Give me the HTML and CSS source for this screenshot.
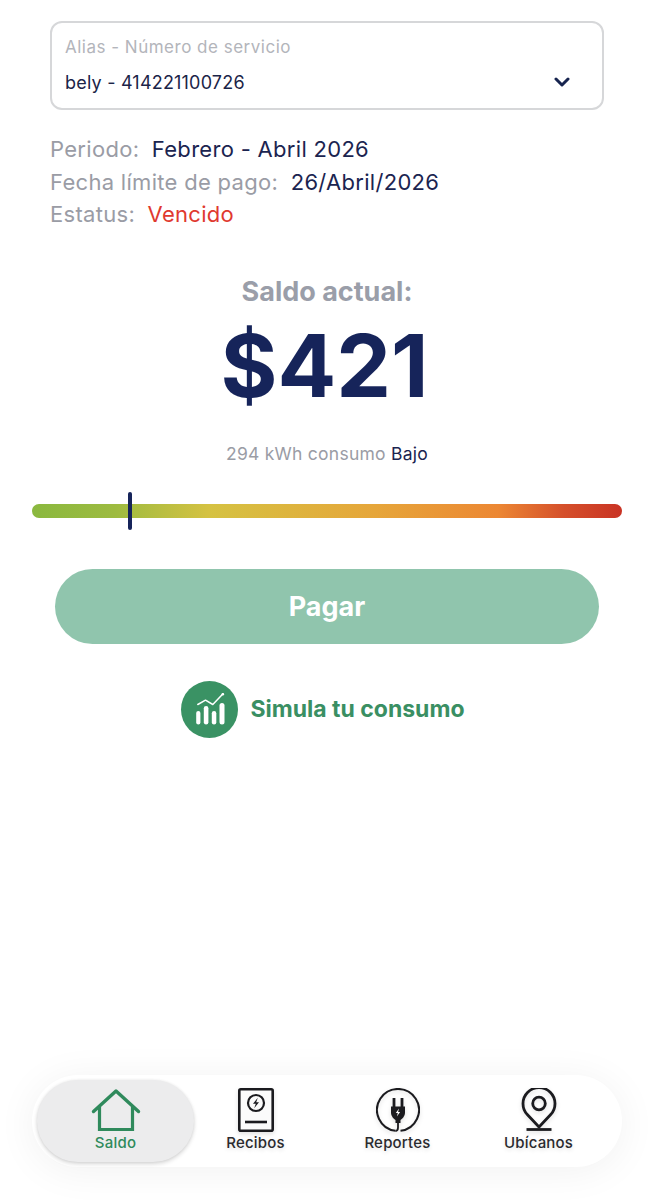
FILE: index.html
```html
<!DOCTYPE html>
<html lang="es">
<head>
  <meta charset="UTF-8" />
  <meta name="viewport" content="width=device-width, initial-scale=1.0"/>
  <title>Saldo</title>
  <link rel="stylesheet" href="styles.css">
</head>
<body>
  <main class="screen">
    <div class="select">
      <div class="select-label">Alias - Número de servicio</div>
      <div class="select-row">
        <span class="select-value">bely - 414221100726</span>
        <svg class="chevron" width="16" height="10" viewBox="0 0 16 10"><path d="M2 2l6 6 6-6" fill="none" stroke="#17244f" stroke-width="3" stroke-linecap="round" stroke-linejoin="round"/></svg>
      </div>
    </div>

    <div class="info">
      <div class="info-row"><span class="info-key">Periodo:</span><span class="info-val">Febrero - Abril 2026</span></div>
      <div class="info-row"><span class="info-key">Fecha límite de pago:</span><span class="info-val">26/Abril/2026</span></div>
      <div class="info-row"><span class="info-key">Estatus:</span><span class="info-val late">Vencido</span></div>
    </div>

    <h2 class="balance-title">Saldo actual:</h2>
    <div class="balance">$421</div>
    <p class="usage">294 kWh consumo <span class="usage-level">Bajo</span></p>

    <div class="meter">
      <div class="meter-bar"></div>
      <div class="meter-mark"></div>
    </div>

    <button class="pay">Pagar</button>

    <a class="simulate">
      <span class="simulate-icon">
        <svg width="32" height="32" viewBox="0 0 32 32">
          <g fill="#fff">
            <rect x="2.200" y="18" width="4.200" height="13.500" rx="2.100"/>
            <rect x="9.800" y="13" width="4.600" height="18.500" rx="2.300"/>
            <rect x="17.800" y="18" width="4.500" height="13.500" rx="2.200"/>
            <rect x="25.500" y="10" width="5" height="21.500" rx="2.500"/>
          </g>
          <path d="M3.800 11.500l7.700-4.300 7.300 4.300L28.800 1" fill="none" stroke="#fff" stroke-width="1.500" stroke-linecap="round" stroke-linejoin="round"/>
          <circle cx="28.800" cy="1.200" r="1.300" fill="#fff"/>
        </svg>
      </span>
      <span class="simulate-text">Simula tu consumo</span>
    </a>
  </main>

  <nav class="tabs">
    <a class="tab tab-active">
      <svg class="tab-icon" width="50" height="44" viewBox="0 0 50 44">
        <path d="M2.500 23.500L25 3l22.500 20.500" fill="none" stroke="#2f8a5c" stroke-width="3.400" stroke-linecap="round" stroke-linejoin="round"/>
        <path d="M8.500 19v22.500h33V19" fill="none" stroke="#2f8a5c" stroke-width="3.200"/>
      </svg>
      <span>Saldo</span>
    </a>
    <a class="tab">
      <svg class="tab-icon" width="36" height="44" viewBox="0 0 36 44">
        <rect x="1.300" y="1.300" width="33.400" height="41.400" rx="1.500" fill="#fbfbfb" stroke="#1b1b1f" stroke-width="2.600"/>
        <circle cx="18" cy="15" r="8" fill="none" stroke="#1b1b1f" stroke-width="2.200"/>
        <path d="M19.800 9.800l-4.800 6h2.800l-1.600 4.400 4.800-6h-2.800z" fill="#1b1b1f"/>
        <path d="M7 34h22" stroke="#1b1b1f" stroke-width="2.600"/>
      </svg>
      <span>Recibos</span>
    </a>
    <a class="tab">
      <svg class="tab-icon" width="44" height="44" viewBox="0 0 44 44">
        <path d="M19.500 42.800A21 21 0 1 1 24.500 42.800" fill="none" stroke="#1b1b1f" stroke-width="2"/>
        <path d="M18 10v9M26 10v9" stroke="#1b1b1f" stroke-width="2.800"/>
        <path d="M15 18.500h14v6c0 4-3 6.500-4.500 7.500v3h-5v-3c-1.500-1-4.500-3.500-4.500-7.500z" fill="#1b1b1f"/>
        <path d="M23 20.500l-3.200 4.500h2l-.9 3.500 3.200-4.500h-2z" fill="#fff"/>
        <path d="M22 34v5.500c0 2.500-1.500 3.500-2.500 3.500" fill="none" stroke="#1b1b1f" stroke-width="1.800"/>
      </svg>
      <span>Reportes</span>
    </a>
    <a class="tab">
      <svg class="tab-icon" width="36" height="44" viewBox="0 0 36 44">
        <path d="M18 39L6.500 26.800A16 16 0 1 1 29.500 26.800z" fill="none" stroke="#1b1b1f" stroke-width="2.800" stroke-linejoin="round"/>
        <circle cx="18" cy="15.500" r="6.300" fill="none" stroke="#1b1b1f" stroke-width="2.800"/>
        <path d="M5.500 41.500h25" stroke="#1b1b1f" stroke-width="2.800"/>
      </svg>
      <span>Ubícanos</span>
    </a>
  </nav>
</body>
</html>
```

FILE: styles.css
```css
* {
  box-sizing: border-box;
}
body {
  margin: 0;
  height: 1200px;
  background: #fff;
  font-family: Inter, "Liberation Sans", sans-serif;
  display: flex;
  flex-direction: column;
  overflow: hidden;
}
.screen {
  flex: 1;
  padding: 21px 0 0;
  display: flex;
  flex-direction: column;
  align-items: center;
}
.select {
  width: 554px;
  height: 89px;
  border: 2px solid #d6d7d9;
  border-radius: 12px;
  padding: 14px 13px 0;
}
.select-label {
  font-size: 17px;
  letter-spacing: 0.5px;
  line-height: 20px;
  color: #b3b5bb;
}
.select-row {
  display: flex;
  justify-content: space-between;
  align-items: center;
  margin-top: 15px;
  padding-right: 19px;
  height: 20px;
}
.select-value {
  font-size: 18px;
  letter-spacing: 0.2px;
  color: #1b2448;
}
.info {
  width: 554px;
  margin-top: 23px;
}
.info-row {
  display: flex;
  gap: 12.500px;
  font-size: 22px;
  letter-spacing: 0.3px;
  line-height: 32.500px;
}
.info-key {
  color: #9a9ca5;
}
.info-val {
  color: #1b2450;
}
.info-val.late {
  color: #e0392f;
}
.balance-title {
  margin: 45px 0 0;
  font-size: 27px;
  line-height: 32px;
  font-weight: 700;
  color: #9a9ea9;
}
.balance {
  margin: 12px 5px 0 0;
  font-size: 87px;
  line-height: 92px;
  font-weight: 700;
  color: #16245a;
}
.usage {
  margin: 31px 0 0;
  font-size: 17.500px;
  letter-spacing: 0.25px;
  line-height: 22px;
  color: #9a9ca5;
}
.usage-level {
  color: #1b2450;
}
.meter {
  position: relative;
  width: 590px;
  height: 38px;
  margin-top: 27px;
  display: flex;
  align-items: center;
}
.meter-bar {
  width: 100%;
  height: 14px;
  border-radius: 7px;
  background: linear-gradient(90deg, #8ab83f 0%, #9dbb40 14%, #d5c242 30%, #e6a63a 58%, #ec8733 79%, #d5502b 90%, #c93324 100%);
}
.meter-mark {
  position: absolute;
  left: 96px;
  top: 0;
  width: 4px;
  height: 38px;
  border-radius: 2px;
  background: #16245a;
}
.pay {
  width: 544px;
  height: 75px;
  margin-top: 39px;
  border: 0;
  border-radius: 38px;
  background: #90c5ad;
  color: #fff;
  font-family: inherit;
  font-size: 27px;
  font-weight: 700;
}
.simulate {
  display: flex;
  align-items: center;
  gap: 12px;
  margin: 37px 8px 0 0;
}
.simulate-icon {
  width: 57px;
  height: 57px;
  border-radius: 50%;
  background: #3a9264;
  display: flex;
  align-items: center;
  justify-content: center;
}
.simulate-text {
  font-size: 23px;
  font-weight: 700;
  color: #3a8f63;
}
.tabs {
  align-self: center;
  width: 590px;
  height: 92px;
  margin-bottom: 33px;
  padding: 5px 0 5px 5px;
  border-radius: 46px;
  background: #fff;
  box-shadow: 0 4px 40px rgba(0, 0, 0, 0.06);
  display: grid;
  grid-template-columns: 157px 123px 161px 121px;
}
.tab {
  display: flex;
  flex-direction: column;
  align-items: center;
  justify-content: flex-end;
  padding-bottom: 10px;
  font-size: 15px;
  font-weight: 500;
  letter-spacing: 0.2px;
  line-height: 19px;
  color: #2a2a2e;
  text-shadow: 0 2px 4px rgba(0, 0, 0, 0.12);
}
.tab-icon {
  display: block;
  margin-bottom: 1px;
  filter: drop-shadow(0 2px 2px rgba(0, 0, 0, 0.12));
}
.tab-active {
  border-radius: 41px;
  background: #ececed;
  box-shadow: 0 2px 4px rgba(0, 0, 0, 0.16), 0 0 3px rgba(0, 0, 0, 0.06);
  color: #2f8a5c;
  text-shadow: none;
}
.tab-active .tab-icon {
  filter: none;
}
```
